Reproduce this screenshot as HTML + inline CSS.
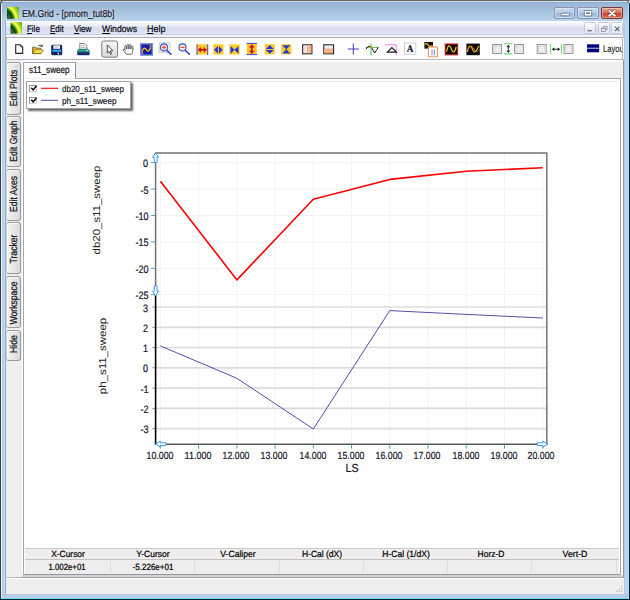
<!DOCTYPE html>
<html lang="en"><head><meta charset="utf-8"><title>EM.Grid - [pmom_tut8b]</title>
<style>
html,body{margin:0;padding:0;background:#fff;}
body{width:630px;height:600px;position:relative;overflow:hidden;font-family:"Liberation Sans",sans-serif;}
.a{position:absolute;box-sizing:border-box;}
.t{position:absolute;white-space:nowrap;display:block;-webkit-text-stroke:0.22px currentColor;text-rendering:geometricPrecision;}
svg{position:absolute;left:0;top:0;overflow:visible;}
</style></head>
<body>
<div class="a " style="left:0px;top:0px;width:630px;height:600px;background:#3e3c3a;border-radius:4px 5px 0 0;"></div>
<div class="a " style="left:0px;top:0px;width:630px;height:1px;background:#6a6662;border-radius:4px 5px 0 0;"></div>
<div class="a " style="left:1px;top:1px;width:628px;height:598px;background:#b6d0ec;border-radius:3.5px 4px 0 0;"></div>
<div class="a " style="left:1px;top:1px;width:628px;height:20px;background:linear-gradient(#d6e6f7 0,#d0e1f4 1px,#8cadcd 1.4px,#9cb8d8 2.4px,#a0bbda 7px,#adc7e3 13px,#b8d2ec 19.6px);border-radius:3.5px 4px 0 0;"></div>
<div class="a " style="left:1px;top:4px;width:1px;height:594px;background:#e8f6ff;"></div>
<div class="a " style="left:2px;top:21px;width:3px;height:577px;background:linear-gradient(90deg,#accae8,#c2def8);"></div>
<div class="a " style="left:5px;top:21px;width:1px;height:577px;background:#98acc4;"></div>
<div class="a " style="left:623px;top:60px;width:1px;height:518px;background:#989898;"></div>
<div class="a " style="left:624px;top:21px;width:3.8px;height:577px;background:linear-gradient(90deg,#b2cce8,#c2d4ec 60%,#c6cee6);"></div>
<div class="a " style="left:627.8px;top:3px;width:1.1px;height:595px;background:#a2e4ff;"></div>
<div class="a " style="left:628.9px;top:3px;width:1.1px;height:597px;background:#06222e;"></div>
<div class="a " style="left:2px;top:594px;width:626px;height:4px;background:linear-gradient(#b0cce8,#c4cce4);"></div>
<div class="a " style="left:1px;top:597.8px;width:628px;height:1.2px;background:#70e0ff;"></div>
<div class="a " style="left:0px;top:599px;width:630px;height:1px;background:#042028;"></div>
<svg width="630" height="600"><defs><radialGradient id="ig7" gradientUnits="userSpaceOnUse" cx="1.10" cy="19.98" r="22.42"><stop offset="0.26" stop-color="#5a7a28"/><stop offset="0.33" stop-color="#073007"/><stop offset="0.5" stop-color="#0a4c0a"/><stop offset="0.57" stop-color="#2e8e18"/><stop offset="0.615" stop-color="#8cd020"/><stop offset="0.655" stop-color="#f6f63e"/><stop offset="0.72" stop-color="#f0f648"/><stop offset="0.77" stop-color="#a4dc22"/><stop offset="0.85" stop-color="#8ccc18"/><stop offset="0.93" stop-color="#5aa612"/><stop offset="1.0" stop-color="#4c9a10"/></radialGradient></defs><rect x="7" y="7" width="11.8" height="11.8" fill="url(#ig7)"/><path d="M7.6 13.490000000000002 L10.776 18.21 M7.4 15.850000000000001 L9.124 18.564" stroke="#b8c890" stroke-width="0.7" opacity="0.7"/></svg>
<span class="t" style="left:21.5px;top:10.43px;font-size:10px;line-height:10px;color:#14142a;transform-origin:0 50%;transform:scaleX(0.8669);text-shadow:0 0 3px rgba(255,255,255,.75),0 0 2px rgba(255,255,255,.6);">EM.Grid - [pmom_tut8b]</span>
<div class="a " style="left:554px;top:7.4px;width:21.2px;height:11.6px;border:1px solid #8496ae;border-radius:2px;box-shadow:inset 0 0 0 1px rgba(255,255,255,.38);background:linear-gradient(#c6d8ee 0,#b6cce7 46%,#9cb7d8 52%,#adc6e4 100%);"></div>
<div class="a " style="left:577.4px;top:7.4px;width:21.2px;height:11.6px;border:1px solid #8496ae;border-radius:2px;box-shadow:inset 0 0 0 1px rgba(255,255,255,.38);background:linear-gradient(#c6d8ee 0,#b6cce7 46%,#9cb7d8 52%,#adc6e4 100%);"></div>
<div class="a " style="left:601px;top:7.4px;width:22px;height:11.6px;border:1px solid #7a3a30;border-radius:2px;box-shadow:inset 0 0 0 1px rgba(255,255,255,.35);background:linear-gradient(#e9a898 0,#d9705c 45%,#c8432c 50%,#d46a4e 100%);"></div>
<svg width="630" height="600"><rect x="561" y="13.2" width="8.5" height="2.6" rx="1" fill="#fff" stroke="#56657a" stroke-width="0.8"/><rect x="584.3" y="10.6" width="7.4" height="5.4" rx="0.8" fill="#fff" stroke="#56657a" stroke-width="0.8"/><rect x="586.2" y="12.4" width="3.6" height="1.6" fill="#5a6f8f"/><path d="M609.2 10.9 L615 15.7 M615 10.9 L609.2 15.7" stroke="#7c4a48" stroke-width="3" stroke-linecap="round"/><path d="M609.2 10.9 L615 15.7 M615 10.9 L609.2 15.7" stroke="#fff" stroke-width="1.8" stroke-linecap="round"/></svg>
<div class="a " style="left:6px;top:20.8px;width:617px;height:13.6px;background:linear-gradient(#fff 0,#fff 1.3px,#f2f4fb 2.2px,#ebeef8 5px,#d6dcee 6.6px,#dfe5f4 13px);"></div>
<div class="a " style="left:6px;top:34px;width:617px;height:0.7px;background:#c6ccdc;"></div>
<svg width="630" height="600"><defs><radialGradient id="ig10" gradientUnits="userSpaceOnUse" cx="4.75" cy="34.75" r="21.85"><stop offset="0.26" stop-color="#5a7a28"/><stop offset="0.33" stop-color="#073007"/><stop offset="0.5" stop-color="#0a4c0a"/><stop offset="0.57" stop-color="#2e8e18"/><stop offset="0.615" stop-color="#8cd020"/><stop offset="0.655" stop-color="#f6f63e"/><stop offset="0.72" stop-color="#f0f648"/><stop offset="0.77" stop-color="#a4dc22"/><stop offset="0.85" stop-color="#8ccc18"/><stop offset="0.93" stop-color="#5aa612"/><stop offset="1.0" stop-color="#4c9a10"/></radialGradient></defs><rect x="10.5" y="22.1" width="11.5" height="11.5" fill="url(#ig10)"/><path d="M11.1 28.425 L14.18 33.025 M10.9 30.725 L12.57 33.370000000000005" stroke="#b8c890" stroke-width="0.7" opacity="0.7"/></svg>
<span class="t" style="left:27.4px;top:25.47px;font-size:9.6px;line-height:9.6px;color:#0c0c16;transform-origin:0 50%;transform:scaleX(0.8266);"><u>F</u>ile</span>
<span class="t" style="left:49.8px;top:25.47px;font-size:9.6px;line-height:9.6px;color:#0c0c16;transform-origin:0 50%;transform:scaleX(0.8340);"><u>E</u>dit</span>
<span class="t" style="left:74px;top:25.47px;font-size:9.6px;line-height:9.6px;color:#0c0c16;transform-origin:0 50%;transform:scaleX(0.8478);"><u>V</u>iew</span>
<span class="t" style="left:102px;top:25.47px;font-size:9.6px;line-height:9.6px;color:#0c0c16;transform-origin:0 50%;transform:scaleX(0.9040);"><u>W</u>indows</span>
<span class="t" style="left:147px;top:25.47px;font-size:9.6px;line-height:9.6px;color:#0c0c16;transform-origin:0 50%;transform:scaleX(0.9367);"><u>H</u>elp</span>
<div class="a " style="left:583.6px;top:22.4px;width:12.1px;height:11.9px;border:1px solid #c3c9d8;border-radius:1.5px;background:linear-gradient(#fafbfe,#eef1f9 45%,#e4e8f4 55%,#eceff8);"></div>
<div class="a " style="left:597.6px;top:22.4px;width:12.1px;height:11.9px;border:1px solid #c3c9d8;border-radius:1.5px;background:linear-gradient(#fafbfe,#eef1f9 45%,#e4e8f4 55%,#eceff8);"></div>
<div class="a " style="left:611.1px;top:22.4px;width:12.2px;height:11.9px;border:1px solid #c3c9d8;border-radius:1.5px;background:linear-gradient(#fafbfe,#eef1f9 45%,#e4e8f4 55%,#eceff8);"></div>
<svg width="630" height="600"><rect x="587.5" y="30.2" width="4.3" height="1.1" fill="#4c586c"/><path d="M603.2 28 L603.2 26.4 L607 26.4 L607 29.6 L605.4 29.6" fill="none" stroke="#7c8698" stroke-width="0.8"/><rect x="601.4" y="28.3" width="3.8" height="3.2" fill="#f0f3f9" stroke="#7c8698" stroke-width="0.8"/><path d="M615 26.6 L619.4 31.2 M619.4 26.6 L615 31.2" stroke="#566074" stroke-width="1.1"/></svg>
<div class="a " style="left:6px;top:34.7px;width:617px;height:25.4px;background:#f6f6f6;"></div>
<div class="a " style="left:6px;top:36.9px;width:617px;height:23px;background:#fefefe;border:1px solid #b2b5bf;border-top-color:#a9a9b2;"></div>
<svg width="630" height="600"><path d="M15.7 44.7 L20.4 44.7 L22.7 46.9 L22.7 53.4 L15.7 53.4 Z" fill="#fff" stroke="#222" stroke-width="1.1"/><path d="M20.3 44.8 L20.3 47 L22.6 47" fill="none" stroke="#333" stroke-width="0.7"/><path d="M32.5 47.2 L35.8 47.2 L36.6 48.2 L40.8 48.2 L40.8 53.6 L32.5 53.6 Z" fill="#e0b020" stroke="#5a4a14" stroke-width="0.7"/><path d="M32.7 53.6 L35 50 L43.4 50 L41 53.6 Z" fill="#ffdc34" stroke="#6a5410" stroke-width="0.7"/><path d="M35.4 50.5 L42.4 50.5" stroke="#fff6c0" stroke-width="0.6"/><path d="M38.2 46 Q40.4 44.2 42 46.2 M42.4 44.6 L42.2 46.6 L40.4 46.2" fill="none" stroke="#222" stroke-width="0.8"/><rect x="51.6" y="45.2" width="10.2" height="9.6" rx="0.6" fill="#16246a" stroke="#0c1440" stroke-width="0.7"/><rect x="53.4" y="45.4" width="6.6" height="3.4" fill="#f4f6fa"/><rect x="54.6" y="46.8" width="3.6" height="0.7" fill="#9aa"/><rect x="52.4" y="49.6" width="8.6" height="2.4" fill="#2f9ff0"/><rect x="54" y="52.2" width="5.4" height="2.6" fill="#10184a"/><rect x="57.6" y="52.6" width="1.3" height="2" fill="#e8eefc"/><path d="M79.8 49.4 L79.8 43.4 L84.6 43.4 L86.8 45.6 L86.8 49.4 Z" fill="#fff" stroke="#666" stroke-width="0.8"/><rect x="81.2" y="45.4" width="3.4" height="0.8" fill="#999"/><rect x="81.2" y="47" width="4.2" height="0.8" fill="#aaa"/><path d="M78.8 49.2 L88 49.2 L89.4 50.6 L89.4 52.2 L77.4 52.2 L77.4 50.6 Z" fill="#2da08c" stroke="#1e6a62" stroke-width="0.5"/><rect x="77.4" y="52.2" width="12" height="2.7" rx="0.7" fill="#1c2f7c" stroke="#14204e" stroke-width="0.5"/><rect x="86.4" y="50.2" width="1.8" height="0.9" fill="#dff"/><defs><linearGradient id="pb" x1="0" y1="0" x2="0" y2="1"><stop offset="0" stop-color="#f6f6f6"/><stop offset="1" stop-color="#dadada"/></linearGradient><linearGradient id="cb" x1="0" y1="0" x2="1" y2="1"><stop offset="0" stop-color="#e4e4e4"/><stop offset="1" stop-color="#fafafa"/></linearGradient></defs><rect x="101.8" y="41" width="15.8" height="16.2" rx="2" fill="url(#pb)" stroke="#7c7c7c" stroke-width="1"/><path d="M107.3 44.9 L107.3 53 L109.1 51.4 L110.5 54.4 L111.6 53.9 L110.3 51 L112.8 50.8 Z" fill="#fff" stroke="#111" stroke-width="0.7" stroke-linejoin="round"/><path d="M126.4 54.2 L123.3 50.4 Q122.8 49.4 123.6 49 Q124.4 48.8 125.2 50 L125.4 50.6 L125.4 48 L132.6 48 L132.8 51 Q132.6 53 131.4 54.2 Z" fill="#fff" stroke="#2a2a2a" stroke-width="0.75" stroke-linejoin="round"/><path d="M124.9 49.6 L124.9 46.4 Q124.9 45.6 125.75 45.6 Q126.60000000000001 45.6 126.60000000000001 46.4 L126.60000000000001 49.6" fill="#fff" stroke="#2a2a2a" stroke-width="0.7"/><path d="M127.0 49.6 L127.0 45.3 Q127.0 44.5 127.85 44.5 Q128.7 44.5 128.7 45.3 L128.7 49.6" fill="#fff" stroke="#2a2a2a" stroke-width="0.7"/><path d="M129.1 49.6 L129.1 45.4 Q129.1 44.6 129.95 44.6 Q130.79999999999998 44.6 130.79999999999998 45.4 L130.79999999999998 49.6" fill="#fff" stroke="#2a2a2a" stroke-width="0.7"/><path d="M131.2 49.6 L131.2 46.8 Q131.2 46 132.04999999999998 46 Q132.89999999999998 46 132.89999999999998 46.8 L132.89999999999998 49.6" fill="#fff" stroke="#2a2a2a" stroke-width="0.7"/><rect x="125.4" y="49.2" width="7" height="1.2" fill="#fff"/><rect x="140" y="43.1" width="13" height="12.7" fill="#7686ec"/><rect x="141.4" y="44.5" width="10.2" height="9.9" fill="#1a1a9c"/><path d="M142 51.6 Q143.6 46 146.2 49.5 Q148.8 53.6 150.6 47.4" fill="none" stroke="#f2d21a" stroke-width="1.3"/><rect x="149.6" y="45.2" width="1.6" height="1.4" fill="#f2d21a"/><rect x="141.6" y="52.4" width="1.6" height="1.4" fill="#f2d21a"/><rect x="159.1" y="42.8" width="10.9" height="9.6" fill="#f3f3f3" stroke="#c4c4c4" stroke-width="0.8"/><path d="M166.6 50.2 L171 54.2" stroke="#2c3cc0" stroke-width="1.5" stroke-linecap="round"/><circle cx="164" cy="47.4" r="3.5" fill="#f8e8d8" stroke="#3c5ad2" stroke-width="1.1"/><path d="M162 47.4 L166 47.4" stroke="#ee5522" stroke-width="1.2"/><path d="M164 45.4 L164 49.4" stroke="#ee5522" stroke-width="1.2"/><path d="M185.1 50.2 L189.5 54.2" stroke="#2c3cc0" stroke-width="1.5" stroke-linecap="round"/><circle cx="182.5" cy="47.4" r="3.5" fill="#f8e8d8" stroke="#3c5ad2" stroke-width="1.1"/><path d="M180.5 47.4 L184.5 47.4" stroke="#ee5522" stroke-width="1.2"/><rect x="196.8" y="44.3" width="11" height="10.2" fill="#ffc928"/><path d="M197 44.4 L197 55 M207.7 44.4 L207.7 55" stroke="#2838d8" stroke-width="0.9"/><path d="M199.6 49.8 L205.2 49.8" stroke="#d01010" stroke-width="1.7"/><path d="M197.8 49.8 L201 46.9 L201 52.7 Z M207 49.8 L203.8 46.9 L203.8 52.7 Z" fill="#d01010"/><rect x="213.3" y="44.3" width="10.2" height="10.2" fill="#ffc928"/><path d="M214.1 49.8 L217.9 45.9 L217.9 53.7 Z M222.7 49.8 L218.9 45.9 L218.9 53.7 Z" fill="#2838d8"/><rect x="229.4" y="44.3" width="10.2" height="10.2" fill="#ffc928"/><path d="M230.5 45.9 L234.6 49.8 L230.5 53.7 Z M238.5 45.9 L234.4 49.8 L238.5 53.7 Z" fill="#2838d8"/><rect x="246.8" y="43.4" width="10" height="11.2" fill="#ffc928"/><path d="M246.4 43.4 L257.2 43.4 M246.4 54.6 L257.2 54.6" stroke="#2838d8" stroke-width="0.9"/><path d="M251.8 46.2 L251.8 52" stroke="#d01010" stroke-width="1.7"/><path d="M251.8 44.2 L248.9 47.4 L254.7 47.4 Z M251.8 54 L248.9 50.8 L254.7 50.8 Z" fill="#d01010"/><rect x="264.7" y="44.2" width="10.2" height="10.2" fill="#ffc928"/><path d="M269.8 45.1 L265.7 48.9 L273.9 48.9 Z M269.8 53.7 L265.7 49.9 L273.9 49.9 Z" fill="#2838d8"/><rect x="281.2" y="44.2" width="10.2" height="10.2" fill="#ffc928"/><path d="M282.3 45.2 L290.3 45.2 L286.3 49.5 Z M282.3 53.5 L290.3 53.5 L286.3 49.2 Z" fill="#2838d8"/><rect x="302.7" y="44.8" width="9.2" height="9" fill="#fafafa" stroke="#262626" stroke-width="1.1"/><rect x="307.2" y="45.4" width="4.2" height="7.8" fill="#f09458"/><path d="M308.5 45.4 L308.5 53.2 M310 45.4 L310 53.2" stroke="#fff" stroke-width="0.5"/><path d="M304.4 45.4 L304.4 53.2 M305.8 45.4 L305.8 53.2" stroke="#d0d0d0" stroke-width="0.6"/><rect x="323.8" y="44.8" width="9.8" height="9" fill="#fafafa" stroke="#262626" stroke-width="1.1"/><rect x="324.4" y="48.6" width="8.6" height="4.7" fill="#f09458"/><path d="M324.4 50.1 L333 50.1 M324.4 51.7 L333 51.7" stroke="#fff" stroke-width="0.5"/><path d="M324.4 46.9 L333 46.9" stroke="#d0d0d0" stroke-width="0.6"/><path d="M347.8 49 L358.8 49 M353.3 43.6 L353.3 54.6" stroke="#4444b6" stroke-width="1.05"/><path d="M365.6 47.4 L378.6 47.4 M371 43.4 L371 55.6" stroke="#3cc060" stroke-width="0.95"/><path d="M366 49.2 Q368.2 45 370.6 46.4 L371.6 47.6 L374.6 53 L378.2 47.4" fill="none" stroke="#1a1a1a" stroke-width="1" stroke-linejoin="round"/><circle cx="371" cy="47.2" r="1.1" fill="#f08020"/><path d="M385 44.8 L396.2 44.8 L396.2 55.2" fill="none" stroke="#f260ea" stroke-width="0.85"/><path d="M387.4 52.2 L391.9 47.6 L396.4 52.2 Z" fill="none" stroke="#1a1a1a" stroke-width="1.2"/><rect x="404.4" y="43" width="11.4" height="11.2" fill="#fff" stroke="#cacaca" stroke-width="0.9"/><rect x="424.4" y="42" width="8.6" height="6.6" fill="#111"/><path d="M425 44.4 Q426.6 42.6 428 44.8 Q429.6 47.4 432.6 45.6" fill="none" stroke="#f0d020" stroke-width="1.2"/><rect x="428.4" y="47" width="9" height="9.8" fill="#fff" stroke="#f09050" stroke-width="1"/><path d="M432 49.6 L432 55.4 M434.4 49.6 L434.4 55.4" stroke="#8898e0" stroke-width="1.1"/><rect x="445.2" y="44" width="12.4" height="10.8" fill="#0a0a0a" stroke="#d01818" stroke-width="1.1"/><path d="M446.6 51.6 Q448.4 42 451.2 48.8 Q453.8 56 456.2 47" fill="none" stroke="#f2d21a" stroke-width="1.2"/><rect x="466.4" y="43.6" width="13.4" height="11.6" fill="#0a0a0a"/><path d="M467.4 52 Q469.4 42 472.4 49 Q475 56 478.6 46" fill="none" stroke="#f2c21a" stroke-width="1.1"/><path d="M467.4 50 Q470.4 44 473.2 47.6 Q476 54 478.8 50" fill="none" stroke="#c07818" stroke-width="0.9"/><rect x="492.6" y="44.5" width="9" height="9" fill="url(#cb)" stroke="#8e8f8f" stroke-width="0.9"/><rect x="494.20000000000005" y="46.1" width="5.8" height="5.8" fill="none" stroke="#cfcfcf" stroke-width="0.6"/><rect x="514.6" y="44.5" width="9" height="9" fill="url(#cb)" stroke="#8e8f8f" stroke-width="0.9"/><rect x="516.2" y="46.1" width="5.8" height="5.8" fill="none" stroke="#cfcfcf" stroke-width="0.6"/><rect x="537.2" y="44.5" width="9" height="9" fill="url(#cb)" stroke="#8e8f8f" stroke-width="0.9"/><rect x="538.8000000000001" y="46.1" width="5.8" height="5.8" fill="none" stroke="#cfcfcf" stroke-width="0.6"/><rect x="564" y="44.5" width="9" height="9" fill="url(#cb)" stroke="#8e8f8f" stroke-width="0.9"/><rect x="565.6" y="46.1" width="5.8" height="5.8" fill="none" stroke="#cfcfcf" stroke-width="0.6"/><path d="M504 43.8 L512.4 43.8 M504 53.9 L512.4 53.9" stroke="#6ee06e" stroke-width="1.1"/><path d="M508.3 46 L508.3 51.8" stroke="#222" stroke-width="0.9"/><path d="M508.3 44.8 L506.4 47.3 L510.2 47.3 Z M508.3 53 L506.4 50.5 L510.2 50.5 Z" fill="#222"/><path d="M550.6 44 L550.6 54 M561.4 44 L561.4 54" stroke="#6ee06e" stroke-width="1.1"/><path d="M552.6 49.2 L559.4 49.2" stroke="#222" stroke-width="0.9"/><path d="M551.8 49.2 L554.4 47.4 L554.4 51 Z M560.2 49.2 L557.6 47.4 L557.6 51 Z" fill="#222"/><rect x="587" y="44.3" width="12.2" height="8" fill="#00007e"/><rect x="587" y="47.7" width="12.2" height="1.1" fill="#b8b8e4"/></svg>
<span class="t" style="left:410.1px;top:44.67px;font-size:10.2px;line-height:10.2px;color:#0c0c30;font-weight:bold;font-family:'Liberation Serif', serif;transform-origin:0 50%;transform:scaleX(0.8968) translateX(-50%);">A</span>
<span class="t" style="left:602.6px;top:44.70px;font-size:9.8px;line-height:9.8px;color:#111;transform-origin:0 50%;transform:scaleX(0.7789);-webkit-text-stroke:0.1px #111;">Layou</span>
<div class="a " style="left:622.2px;top:37.9px;width:1.8px;height:21px;background:#f6f6f6;border-left:0.9px solid #b2b5bf;"></div>
<div class="a " style="left:6px;top:60px;width:617px;height:518.6px;background:#fff;"></div>
<div class="a " style="left:6px;top:60px;width:15.5px;height:517px;background:#efefef;"></div>
<div class="a " style="left:6.2px;top:62px;width:14.8px;height:53px;border:1px solid #9a9a9a;border-left-color:#cfcfcf;border-radius:3px;background:linear-gradient(90deg,#f3f3f3,#dadada);box-shadow:inset 1px 1px 0 #fafafa;"></div>
<span class="t" style="left:18.6px;top:88px;font-size:10.3px;line-height:10.3px;color:#141420;transform-origin:0 0;transform:rotate(-90deg) scaleX(0.8400) translate(-50%,-8.72px);">Edit Plots</span>
<div class="a " style="left:6.2px;top:116px;width:14.8px;height:51.30000000000001px;border:1px solid #9a9a9a;border-left-color:#cfcfcf;border-radius:3px;background:linear-gradient(90deg,#f3f3f3,#dadada);box-shadow:inset 1px 1px 0 #fafafa;"></div>
<span class="t" style="left:18.6px;top:141.3px;font-size:10.3px;line-height:10.3px;color:#141420;transform-origin:0 0;transform:rotate(-90deg) scaleX(0.8400) translate(-50%,-8.72px);">Edit Graph</span>
<div class="a " style="left:6.2px;top:168.6px;width:14.8px;height:52.0px;border:1px solid #9a9a9a;border-left-color:#cfcfcf;border-radius:3px;background:linear-gradient(90deg,#f3f3f3,#dadada);box-shadow:inset 1px 1px 0 #fafafa;"></div>
<span class="t" style="left:18.6px;top:194.4px;font-size:10.3px;line-height:10.3px;color:#141420;transform-origin:0 0;transform:rotate(-90deg) scaleX(0.8400) translate(-50%,-8.72px);">Edit Axes</span>
<div class="a " style="left:6.2px;top:222.4px;width:14.8px;height:51.79999999999998px;border:1px solid #9a9a9a;border-left-color:#cfcfcf;border-radius:3px;background:linear-gradient(90deg,#f3f3f3,#dadada);box-shadow:inset 1px 1px 0 #fafafa;"></div>
<span class="t" style="left:18.6px;top:248.5px;font-size:10.3px;line-height:10.3px;color:#141420;transform-origin:0 0;transform:rotate(-90deg) scaleX(0.8400) translate(-50%,-8.72px);">Tracker</span>
<div class="a " style="left:6.2px;top:275.8px;width:14.8px;height:52.5px;border:1px solid #9a9a9a;border-left-color:#cfcfcf;border-radius:3px;background:linear-gradient(90deg,#f3f3f3,#dadada);box-shadow:inset 1px 1px 0 #fafafa;"></div>
<span class="t" style="left:18.6px;top:302.9px;font-size:10.3px;line-height:10.3px;color:#141420;transform-origin:0 0;transform:rotate(-90deg) scaleX(0.8400) translate(-50%,-8.72px);">Workspace</span>
<div class="a " style="left:6.2px;top:330px;width:14.8px;height:30.80000000000001px;border:1px solid #9a9a9a;border-left-color:#cfcfcf;border-radius:3px;background:linear-gradient(90deg,#f3f3f3,#dadada);box-shadow:inset 1px 1px 0 #fafafa;"></div>
<span class="t" style="left:18.6px;top:344.4px;font-size:10.3px;line-height:10.3px;color:#141420;transform-origin:0 0;transform:rotate(-90deg) scaleX(0.8400) translate(-50%,-8.72px);">Hide</span>
<div class="a " style="left:22px;top:574.6px;width:601px;height:2.6px;background:#d4d4d4;"></div>
<div class="a " style="left:6px;top:577px;width:617px;height:1.6px;background:linear-gradient(90deg,#c4c4c4 0,#a6a6a6 3%,#a6a6a6 100%);"></div>
<div class="a " style="left:23.3px;top:62px;width:599.4px;height:16.5px;background:#efefef;"></div>
<div class="a " style="left:23.3px;top:77.6px;width:597.8px;height:497.2px;background:#fff;border:1px solid #a6a6b2;border-bottom-color:#9494a2;"></div>
<div class="a " style="left:26px;top:80.5px;width:592px;height:1.2px;background:#e6e6e6;"></div>
<div class="a " style="left:23.3px;top:62px;width:52.6px;height:16.2px;background:#fff;border:1px solid #a0a4b0;border-bottom:none;border-right-color:#8c92a2;"></div>
<div class="a " style="left:24.3px;top:77.6px;width:50.6px;height:1px;background:#f0f0f0;"></div>
<span class="t" style="left:29.2px;top:65.50px;font-size:9.8px;line-height:9.8px;color:#111;transform-origin:0 50%;transform:scaleX(0.8312);">s11_sweep</span>
<div class="a " style="left:25.8px;top:80.8px;width:105px;height:27.8px;background:#fff;border:1px solid #a2a2a2;box-shadow:1.5px 2px 1.8px rgba(0,0,0,.6);"></div>
<div class="a " style="left:29.4px;top:84.6px;width:8px;height:7.8px;background:#fff;border:1px solid #d4d4d4;border-top-color:#909090;border-left-color:#909090;"></div>
<svg width="630" height="600"><path d="M31.3 87.7 L33.2 89.89999999999999 L36.5 85.89999999999999" stroke="#000" stroke-width="1.5" fill="none"/><line x1="41" y1="88.3" x2="58" y2="88.3" stroke="#ff0000" stroke-width="1.1"/></svg>
<span class="t" style="left:62.3px;top:85.17px;font-size:8.9px;line-height:8.9px;color:#1c1c2c;transform-origin:0 50%;transform:scaleX(0.8996);">db20_s11_sweep</span>
<div class="a " style="left:29.4px;top:96.6px;width:8px;height:7.8px;background:#fff;border:1px solid #d4d4d4;border-top-color:#909090;border-left-color:#909090;"></div>
<svg width="630" height="600"><path d="M31.3 99.7 L33.2 101.89999999999999 L36.5 97.89999999999999" stroke="#000" stroke-width="1.5" fill="none"/><line x1="41" y1="100.3" x2="58" y2="100.3" stroke="#5a5ab4" stroke-width="1.1"/></svg>
<span class="t" style="left:62.3px;top:97.17px;font-size:8.9px;line-height:8.9px;color:#1c1c2c;transform-origin:0 50%;transform:scaleX(0.9228);">ph_s11_sweep</span>
<svg width="630" height="600"><line x1="160.4" y1="154" x2="160.4" y2="443" stroke="#f2f2f2" stroke-width="1"/><line x1="198.6" y1="154" x2="198.6" y2="443" stroke="#f2f2f2" stroke-width="1"/><line x1="236.9" y1="154" x2="236.9" y2="443" stroke="#f2f2f2" stroke-width="1"/><line x1="275.1" y1="154" x2="275.1" y2="443" stroke="#f2f2f2" stroke-width="1"/><line x1="313.3" y1="154" x2="313.3" y2="443" stroke="#f2f2f2" stroke-width="1"/><line x1="351.5" y1="154" x2="351.5" y2="443" stroke="#f2f2f2" stroke-width="1"/><line x1="389.8" y1="154" x2="389.8" y2="443" stroke="#f2f2f2" stroke-width="1"/><line x1="428.0" y1="154" x2="428.0" y2="443" stroke="#f2f2f2" stroke-width="1"/><line x1="466.2" y1="154" x2="466.2" y2="443" stroke="#f2f2f2" stroke-width="1"/><line x1="504.5" y1="154" x2="504.5" y2="443" stroke="#f2f2f2" stroke-width="1"/><line x1="542.7" y1="154" x2="542.7" y2="443" stroke="#f2f2f2" stroke-width="1"/><line x1="156" y1="162.7" x2="546" y2="162.7" stroke="#f2f2f2" stroke-width="1"/><line x1="156" y1="189.1" x2="546" y2="189.1" stroke="#f2f2f2" stroke-width="1"/><line x1="156" y1="215.5" x2="546" y2="215.5" stroke="#f2f2f2" stroke-width="1"/><line x1="156" y1="241.9" x2="546" y2="241.9" stroke="#f2f2f2" stroke-width="1"/><line x1="156" y1="268.3" x2="546" y2="268.3" stroke="#f2f2f2" stroke-width="1"/><line x1="156" y1="294.7" x2="546" y2="294.7" stroke="#f2f2f2" stroke-width="1"/><line x1="156" y1="307.0" x2="546" y2="307.0" stroke="#dcdcdc" stroke-width="1.7"/><line x1="156" y1="327.3" x2="546" y2="327.3" stroke="#dcdcdc" stroke-width="1.7"/><line x1="156" y1="347.5" x2="546" y2="347.5" stroke="#dcdcdc" stroke-width="1.7"/><line x1="156" y1="367.8" x2="546" y2="367.8" stroke="#dcdcdc" stroke-width="1.7"/><line x1="156" y1="388.1" x2="546" y2="388.1" stroke="#dcdcdc" stroke-width="1.7"/><line x1="156" y1="408.4" x2="546" y2="408.4" stroke="#dcdcdc" stroke-width="1.7"/><line x1="156" y1="428.6" x2="546" y2="428.6" stroke="#dcdcdc" stroke-width="1.7"/><line x1="151" y1="162.7" x2="155" y2="162.7" stroke="#5aaba0" stroke-width="1"/><line x1="151" y1="189.1" x2="155" y2="189.1" stroke="#5aaba0" stroke-width="1"/><line x1="151" y1="215.5" x2="155" y2="215.5" stroke="#5aaba0" stroke-width="1"/><line x1="151" y1="241.9" x2="155" y2="241.9" stroke="#5aaba0" stroke-width="1"/><line x1="151" y1="268.3" x2="155" y2="268.3" stroke="#5aaba0" stroke-width="1"/><line x1="151" y1="294.7" x2="155" y2="294.7" stroke="#5aaba0" stroke-width="1"/><line x1="152.3" y1="307.0" x2="155" y2="307.0" stroke="#909090" stroke-width="1"/><line x1="152.3" y1="327.3" x2="155" y2="327.3" stroke="#909090" stroke-width="1"/><line x1="152.3" y1="347.5" x2="155" y2="347.5" stroke="#909090" stroke-width="1"/><line x1="152.3" y1="367.8" x2="155" y2="367.8" stroke="#909090" stroke-width="1"/><line x1="152.3" y1="388.1" x2="155" y2="388.1" stroke="#909090" stroke-width="1"/><line x1="152.3" y1="408.4" x2="155" y2="408.4" stroke="#909090" stroke-width="1"/><line x1="152.3" y1="428.6" x2="155" y2="428.6" stroke="#909090" stroke-width="1"/><line x1="160.4" y1="445" x2="160.4" y2="448.6" stroke="#4fa9a2" stroke-width="1"/><line x1="198.6" y1="445" x2="198.6" y2="448.6" stroke="#4fa9a2" stroke-width="1"/><line x1="236.9" y1="445" x2="236.9" y2="448.6" stroke="#4fa9a2" stroke-width="1"/><line x1="275.1" y1="445" x2="275.1" y2="448.6" stroke="#4fa9a2" stroke-width="1"/><line x1="313.3" y1="445" x2="313.3" y2="448.6" stroke="#4fa9a2" stroke-width="1"/><line x1="351.5" y1="445" x2="351.5" y2="448.6" stroke="#4fa9a2" stroke-width="1"/><line x1="389.8" y1="445" x2="389.8" y2="448.6" stroke="#4fa9a2" stroke-width="1"/><line x1="428.0" y1="445" x2="428.0" y2="448.6" stroke="#4fa9a2" stroke-width="1"/><line x1="466.2" y1="445" x2="466.2" y2="448.6" stroke="#4fa9a2" stroke-width="1"/><line x1="504.5" y1="445" x2="504.5" y2="448.6" stroke="#4fa9a2" stroke-width="1"/><line x1="542.7" y1="445" x2="542.7" y2="448.6" stroke="#4fa9a2" stroke-width="1"/><path d="M155.6 296 L155.6 153 L546.8 153 L546.8 444.2" fill="none" stroke="#737373" stroke-width="1.5"/><path d="M155.6 295.5 L155.6 444.2" fill="none" stroke="#000" stroke-width="1.6"/><path d="M154.8 444.2 L547.5 444.2" fill="none" stroke="#595959" stroke-width="1.5"/><polyline fill="none" stroke="#ff0000" stroke-width="1.6" stroke-linejoin="round" points="160.4,181.2 236.9,279.9 313.3,199.3 389.8,179.4 466.2,171.2 542.7,167.8"/><polyline fill="none" stroke="#5050a8" stroke-width="1" stroke-linejoin="round" points="160.4,345.9 236.9,378.3 313.3,429 389.8,310.6 466.2,314.4 542.7,318"/><path d="M155.6 153 L158.6 157.2 L157 157.2 L157 162.6 L154.2 162.6 L154.2 157.2 L152.6 157.2 Z" fill="#fff" stroke="#3a96f5" stroke-width="1" stroke-linejoin="round"/><path d="M155.6 296 L158.6 291.2 L157 291.2 L157 285.8 L154.2 285.8 L154.2 291.2 L152.6 291.2 Z" fill="#fff" stroke="#3a96f5" stroke-width="1" stroke-linejoin="round"/><path d="M155.6 444.2 L160.2 441.2 L160.2 442.8 L166 442.8 L166 445.6 L160.2 445.6 L160.2 447.2 Z" fill="#fff" stroke="#3a96f5" stroke-width="1" stroke-linejoin="round"/><path d="M547.6 444.2 L543 441.2 L543 442.8 L537.2 442.8 L537.2 445.6 L543 445.6 L543 447.2 Z" fill="#fff" stroke="#3a96f5" stroke-width="1" stroke-linejoin="round"/></svg>
<span class="t" style="right:481.7px;top:159.06px;font-size:10.8px;line-height:10.8px;color:#17172b;transform-origin:100% 50%;transform:scaleX(0.8400);">0</span>
<span class="t" style="right:481.7px;top:186.46px;font-size:10.8px;line-height:10.8px;color:#17172b;transform-origin:100% 50%;transform:scaleX(0.8400);">-5</span>
<span class="t" style="right:481.7px;top:211.86px;font-size:10.8px;line-height:10.8px;color:#17172b;transform-origin:100% 50%;transform:scaleX(0.8400);">-10</span>
<span class="t" style="right:481.7px;top:238.26px;font-size:10.8px;line-height:10.8px;color:#17172b;transform-origin:100% 50%;transform:scaleX(0.8400);">-15</span>
<span class="t" style="right:481.7px;top:264.66px;font-size:10.8px;line-height:10.8px;color:#17172b;transform-origin:100% 50%;transform:scaleX(0.8400);">-20</span>
<span class="t" style="right:481.7px;top:291.06px;font-size:10.8px;line-height:10.8px;color:#17172b;transform-origin:100% 50%;transform:scaleX(0.8400);">-25</span>
<span class="t" style="right:481.7px;top:304.36px;font-size:10.8px;line-height:10.8px;color:#17172b;transform-origin:100% 50%;transform:scaleX(0.8400);">3</span>
<span class="t" style="right:481.7px;top:323.63px;font-size:10.8px;line-height:10.8px;color:#17172b;transform-origin:100% 50%;transform:scaleX(0.8400);">2</span>
<span class="t" style="right:481.7px;top:343.90px;font-size:10.8px;line-height:10.8px;color:#17172b;transform-origin:100% 50%;transform:scaleX(0.8400);">1</span>
<span class="t" style="right:481.7px;top:364.17px;font-size:10.8px;line-height:10.8px;color:#17172b;transform-origin:100% 50%;transform:scaleX(0.8400);">0</span>
<span class="t" style="right:481.7px;top:385.44px;font-size:10.8px;line-height:10.8px;color:#17172b;transform-origin:100% 50%;transform:scaleX(0.8400);">-1</span>
<span class="t" style="right:481.7px;top:404.71px;font-size:10.8px;line-height:10.8px;color:#17172b;transform-origin:100% 50%;transform:scaleX(0.8400);">-2</span>
<span class="t" style="right:481.7px;top:424.98px;font-size:10.8px;line-height:10.8px;color:#17172b;transform-origin:100% 50%;transform:scaleX(0.8400);">-3</span>
<span class="t" style="left:159.8px;top:452.08px;font-size:10.3px;line-height:10.3px;color:#17172b;transform-origin:0 50%;transform:scaleX(0.8508) translateX(-50%);">10.000</span>
<span class="t" style="left:198.03px;top:452.08px;font-size:10.3px;line-height:10.3px;color:#17172b;transform-origin:0 50%;transform:scaleX(0.8720) translateX(-50%);">11.000</span>
<span class="t" style="left:236.26000000000002px;top:452.08px;font-size:10.3px;line-height:10.3px;color:#17172b;transform-origin:0 50%;transform:scaleX(0.8508) translateX(-50%);">12.000</span>
<span class="t" style="left:274.49px;top:452.08px;font-size:10.3px;line-height:10.3px;color:#17172b;transform-origin:0 50%;transform:scaleX(0.8508) translateX(-50%);">13.000</span>
<span class="t" style="left:312.71999999999997px;top:452.08px;font-size:10.3px;line-height:10.3px;color:#17172b;transform-origin:0 50%;transform:scaleX(0.8508) translateX(-50%);">14.000</span>
<span class="t" style="left:350.94999999999993px;top:452.08px;font-size:10.3px;line-height:10.3px;color:#17172b;transform-origin:0 50%;transform:scaleX(0.8508) translateX(-50%);">15.000</span>
<span class="t" style="left:389.17999999999995px;top:452.08px;font-size:10.3px;line-height:10.3px;color:#17172b;transform-origin:0 50%;transform:scaleX(0.8508) translateX(-50%);">16.000</span>
<span class="t" style="left:427.40999999999997px;top:452.08px;font-size:10.3px;line-height:10.3px;color:#17172b;transform-origin:0 50%;transform:scaleX(0.8508) translateX(-50%);">17.000</span>
<span class="t" style="left:465.64px;top:452.08px;font-size:10.3px;line-height:10.3px;color:#17172b;transform-origin:0 50%;transform:scaleX(0.8508) translateX(-50%);">18.000</span>
<span class="t" style="left:503.87px;top:452.08px;font-size:10.3px;line-height:10.3px;color:#17172b;transform-origin:0 50%;transform:scaleX(0.8508) translateX(-50%);">19.000</span>
<span class="t" style="left:541px;top:452.08px;font-size:10.3px;line-height:10.3px;color:#17172b;transform-origin:0 50%;transform:scaleX(0.8508) translateX(-50%);">20.000</span>
<span class="t" style="left:351.6px;top:463.10px;font-size:11.7px;line-height:11.7px;color:#17172b;transform-origin:0 50%;transform:scaleX(0.9163) translateX(-50%);">LS</span>
<span class="t" style="left:101.8px;top:210px;font-size:10.2px;line-height:10.2px;color:#222;transform-origin:0 0;transform:rotate(-90deg) scaleX(1.1223) translate(-50%,-8.63px);-webkit-text-stroke:0;">db20_s11_sweep</span>
<span class="t" style="left:107.8px;top:355.8px;font-size:10.2px;line-height:10.2px;color:#222;transform-origin:0 0;transform:rotate(-90deg) scaleX(1.1272) translate(-50%,-8.63px);-webkit-text-stroke:0;">ph_s11_sweep</span>
<div class="a " style="left:25.3px;top:547.6px;width:594px;height:1px;background:#c9c9c9;"></div>
<div class="a " style="left:25.3px;top:548.6px;width:594px;height:10.4px;background:#efeded;"></div>
<div class="a " style="left:25.3px;top:559px;width:594px;height:1px;background:#c2c2c2;"></div>
<div class="a " style="left:25.3px;top:560px;width:594px;height:13.6px;background:#efeded;"></div>
<span class="t" style="left:68.2px;top:549.58px;font-size:9px;line-height:9px;color:#000;transform-origin:0 50%;transform:scaleX(0.9357) translateX(-50%);">X-Cursor</span>
<span class="t" style="left:153.3px;top:549.58px;font-size:9px;line-height:9px;color:#000;transform-origin:0 50%;transform:scaleX(0.9492) translateX(-50%);">Y-Cursor</span>
<span class="t" style="left:237.5px;top:549.58px;font-size:9px;line-height:9px;color:#000;transform-origin:0 50%;transform:scaleX(0.9537) translateX(-50%);">V-Caliper</span>
<span class="t" style="left:322.4px;top:549.58px;font-size:9px;line-height:9px;color:#000;transform-origin:0 50%;transform:scaleX(0.9455) translateX(-50%);">H-Cal (dX)</span>
<span class="t" style="left:406.1px;top:549.58px;font-size:9px;line-height:9px;color:#000;transform-origin:0 50%;transform:scaleX(0.9517) translateX(-50%);">H-Cal (1/dX)</span>
<span class="t" style="left:490.8px;top:549.58px;font-size:9px;line-height:9px;color:#000;transform-origin:0 50%;transform:scaleX(0.9439) translateX(-50%);">Horz-D</span>
<span class="t" style="left:575px;top:549.58px;font-size:9px;line-height:9px;color:#000;transform-origin:0 50%;transform:scaleX(0.9720) translateX(-50%);">Vert-D</span>
<div class="a " style="left:109.5px;top:560.6px;width:1px;height:12.4px;background:#dedcdc;"></div>
<div class="a " style="left:194.4px;top:560.6px;width:1px;height:12.4px;background:#dedcdc;"></div>
<div class="a " style="left:278.8px;top:560.6px;width:1px;height:12.4px;background:#dedcdc;"></div>
<div class="a " style="left:362.9px;top:560.6px;width:1px;height:12.4px;background:#dedcdc;"></div>
<div class="a " style="left:446.9px;top:560.6px;width:1px;height:12.4px;background:#dedcdc;"></div>
<div class="a " style="left:531.0px;top:560.6px;width:1px;height:12.4px;background:#dedcdc;"></div>
<div class="a " style="left:615.5px;top:560.6px;width:1px;height:12.4px;background:#dedcdc;"></div>
<span class="t" style="left:67.4px;top:563.38px;font-size:9px;line-height:9px;color:#000;transform-origin:0 50%;transform:scaleX(0.8692) translateX(-50%);">1.002e+01</span>
<span class="t" style="left:153.3px;top:563.38px;font-size:9px;line-height:9px;color:#000;transform-origin:0 50%;transform:scaleX(0.8909) translateX(-50%);">-5.226e+01</span>
<div class="a " style="left:6px;top:578.4px;width:618px;height:16px;background:#f0eeee;border-top:1px solid #fff;"></div>
<svg width="630" height="600"><g fill="#c4c4c4"><rect x="621" y="590.6" width="1.4" height="1.4"/><rect x="618.6" y="590.6" width="1.4" height="1.4"/><rect x="616.2" y="590.6" width="1.4" height="1.4"/><rect x="621" y="588.2" width="1.4" height="1.4"/><rect x="618.6" y="588.2" width="1.4" height="1.4"/><rect x="621" y="585.8" width="1.4" height="1.4"/></g></svg>
</body></html>
